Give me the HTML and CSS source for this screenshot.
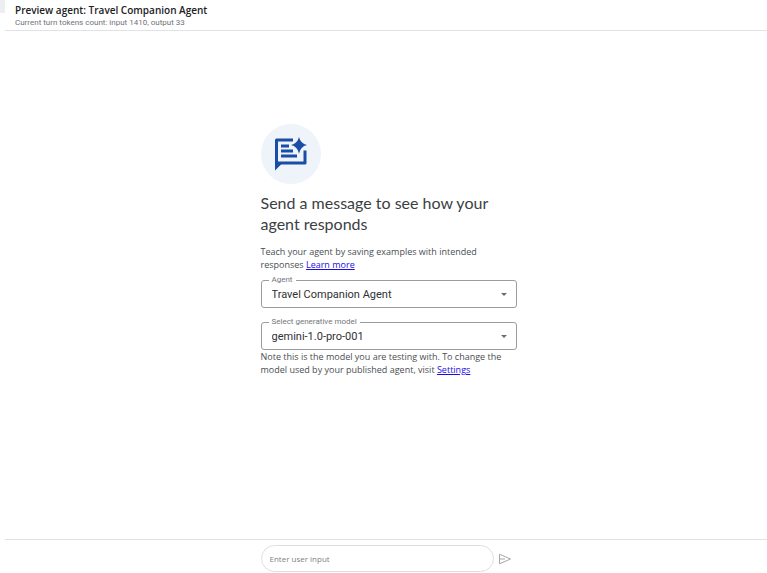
FILE: index.html
```html
<!DOCTYPE html>
<html lang="en">
<head>
<meta charset="utf-8">
<meta name="viewport" content="width=device-width, initial-scale=1">
<title>Preview agent</title>
<link rel="stylesheet" href="styles.css">
</head>
<body>
<div class="rail"><div class="rail-handle"></div></div>
<div class="panel">
  <header class="header">
    <h1 class="title">Preview agent: Travel Companion Agent</h1>
    <p class="tokens">Current turn tokens count: input 1410, output 33</p>
  </header>
  <main class="main">
    <div class="column">
      <div class="badge">
        <svg viewBox="0 0 72 72" width="72" height="72" aria-hidden="true">
          <path d="M38 22H21.500V45H50V32.500" fill="none" stroke="#1a4ea6" stroke-width="3" stroke-linejoin="round"/>
          <path d="M20 44V52.500L27.500 45Z" fill="#1a4ea6"/>
          <path d="M26 28H34M26 33H38M26 38H42" fill="none" stroke="#1a4ea6" stroke-width="3"/>
          <path d="M44 19Q45.500 25.500 52 27Q45.500 28.500 44 35.500Q42.500 28.500 36 27Q42.500 25.500 44 19Z" fill="#1a4ea6"/>
        </svg>
      </div>
      <h2 class="headline">Send a message to see how your agent responds</h2>
      <p class="text">Teach your agent by saving examples with intended responses <a href="#learn">Learn more</a></p>
      <div class="field">
        <label for="agent">Agent</label>
        <select id="agent"><option>Travel Companion Agent</option></select>
        <svg class="arrow" viewBox="0 0 6 3" width="6" height="3" aria-hidden="true"><path d="M0 0H6L3 3Z"/></svg>
      </div>
      <div class="field field-model">
        <label for="model">Select generative model</label>
        <select id="model"><option>gemini-1.0-pro-001</option></select>
        <svg class="arrow" viewBox="0 0 6 3" width="6" height="3" aria-hidden="true"><path d="M0 0H6L3 3Z"/></svg>
      </div>
      <p class="text">Note this is the model you are testing with. To change the model used by your published agent, visit <a href="#settings">Settings</a></p>
    </div>
  </main>
  <footer class="footer">
    <form class="composer">
      <input type="text" placeholder="Enter user input" aria-label="Enter user input">
      <button type="button" aria-label="Send">
        <svg viewBox="0 0 14 12" width="14" height="12" aria-hidden="true"><path d="M1.500 1.200L12.500 6L1.500 10.800V1.200M1.500 6H7" fill="none" stroke="#a4a7aa"/></svg>
      </button>
    </form>
  </footer>
</div>
</body>
</html>
```
FILE: styles.css
```css
* { box-sizing: border-box; }
body {
  margin: 0;
  min-height: 100vh;
  display: flex;
  background: #fff;
  color: #202124;
  font-family: Roboto, "Liberation Sans", sans-serif;
}
h1, h2, p { margin: 0; }
.rail { width: 5px; flex: none; }
.rail-handle { height: 13px; background: #eceef1; }
.panel { flex: 1; display: flex; flex-direction: column; }
.header {
  height: 31px;
  padding: 3px 10px 0;
  border-bottom: 1px solid #e0e2e5;
}
.title { font-family: "Open Sans", sans-serif; font-size: 10px; line-height: 14px; font-weight: 600; }
.tokens { font-size: 8px; line-height: 12px; color: #6f7377; }
.main {
  flex: 1;
  display: flex;
  justify-content: center;
  padding: 93px 0 0 5px;
}
.column { width: 256px; }
.badge {
  width: 60px;
  height: 60px;
  border-radius: 50%;
  background: #eff3fa;
  display: flex;
  align-items: center;
  justify-content: center;
}
.badge svg { flex: none; }
.headline {
  margin: 8px 0 11px;
  font-family: Lato, sans-serif;
  font-size: 16px;
  line-height: 21px;
  font-weight: 400;
  color: #3c4043;
}
.text {
  font-family: "Open Sans", sans-serif;
  font-size: 9px;
  line-height: 13px;
  color: #4a4e52;
}
.text a { color: #1a0dea; }
.field { position: relative; margin-top: 9px; }
.field-model { margin-top: 14px; }
.field label {
  position: absolute;
  top: -5px;
  left: 8px;
  padding: 0 3px;
  background: #fff;
  font-size: 8px;
  line-height: 10px;
  color: #73777b;
}
.field select {
  display: block;
  width: 100%;
  height: 28px;
  padding: 0 24px 0 10px;
  border: 1px solid #9a9c9e;
  border-radius: 3px;
  background: #fff;
  appearance: none;
  font: 11px Roboto, sans-serif;
  color: #303134;
}
.arrow {
  position: absolute;
  top: 13px;
  right: 10px;
  fill: #6b6e71;
  pointer-events: none;
}
.footer {
  display: flex;
  justify-content: center;
  padding: 5px 0 1px 5px;
  border-top: 1px solid #e0e2e5;
}
.composer { width: 256px; display: flex; align-items: center; gap: 4px; }
.composer input {
  width: 233px;
  height: 27px;
  padding: 0 8px;
  border: 1px solid #dcdfe2;
  border-radius: 14px;
  font: 8px "Open Sans", sans-serif;
  color: #303134;
}
.composer input::placeholder { color: #7d8184; opacity: 1; }
.composer button { padding: 0; border: 0; background: none; display: flex; }
```
